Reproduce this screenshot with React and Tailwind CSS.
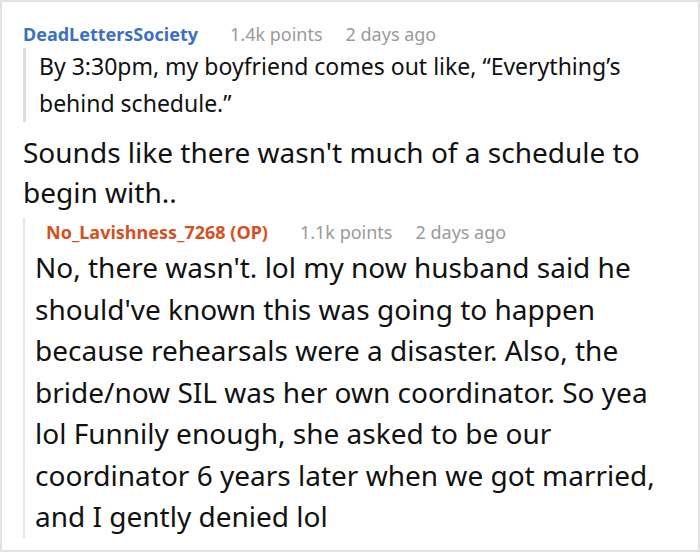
export default function App() {
  const font = { fontFamily: '"Noto Sans", "Open Sans", sans-serif' };
  return (
    <div className="w-[700px] h-[552px] bg-white border-2 border-[#e3e3e3] overflow-hidden" style={font}>
      <div className="pl-[21px] pt-[18px]">
        <div className="flex items-baseline text-[18px] leading-[28px]">
          <span className="font-bold text-[#3b6fc4]">DeadLettersSociety</span>
          <span className="ml-[32px] text-[#9a9a9a]">1.4k points</span>
          <span className="ml-[23px] text-[#9a9a9a]">2 days ago</span>
        </div>
        <div className="border-l-[3px] border-[#dcdcdc] pl-[13px] text-[23px] leading-[37px] text-[#111]">
          <div className="whitespace-nowrap">By 3:30pm, my boyfriend comes out like, “Everything’s</div>
          <div className="whitespace-nowrap">behind schedule.”</div>
        </div>
        <div className="mt-[10px] text-[28px] leading-[40px] text-[#111]">
          <div className="whitespace-nowrap">Sounds like there wasn't much of a schedule to</div>
          <div className="whitespace-nowrap">begin with..</div>
        </div>
        <div className="mt-[6px] border-l-2 border-[#e6e6e6]">
          <div className="flex items-baseline pl-[21px] text-[18px] leading-[28px]">
            <span className="font-bold text-[#d6501e]">No_Lavishness_7268 (OP)</span>
            <span className="ml-[32px] text-[#9a9a9a]">1.1k points</span>
            <span className="ml-[23px] text-[#9a9a9a]">2 days ago</span>
          </div>
          <div className="pl-[10px] pt-[1px] text-[28px] leading-[41.5px] text-[#111]">
            <div className="whitespace-nowrap">No, there wasn't. lol my now husband said he</div>
            <div className="whitespace-nowrap">should've known this was going to happen</div>
            <div className="whitespace-nowrap">because rehearsals were a disaster. Also, the</div>
            <div className="whitespace-nowrap">bride/now SIL was her own coordinator. So yea</div>
            <div className="whitespace-nowrap">lol Funnily enough, she asked to be our</div>
            <div className="whitespace-nowrap">coordinator 6 years later when we got married,</div>
            <div className="whitespace-nowrap">and I gently denied lol</div>
          </div>
        </div>
      </div>
    </div>
  );
}
